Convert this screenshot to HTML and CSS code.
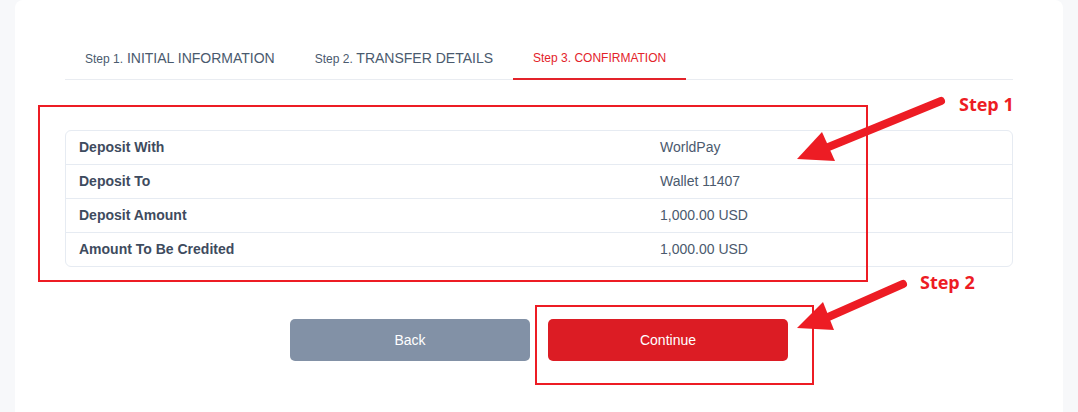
FILE: index.html
```html
<!DOCTYPE html>
<html lang="en">
<head>
    <meta charset="UTF-8">
    <meta name="viewport" content="width=device-width, initial-scale=1.0">
    <title>Deposit - Confirmation</title>
    <link rel="stylesheet" href="styles.css">
</head>
<body>
    <div class="page">
        <div class="card">
            <nav class="steps">
                <a class="step"><span class="step-num">Step 1.</span> INITIAL INFORMATION</a>
                <a class="step"><span class="step-num">Step 2.</span> TRANSFER DETAILS</a>
                <a class="step active"><span class="step-num">Step 3.</span> CONFIRMATION</a>
            </nav>

            <div class="summary">
                <div class="row">
                    <div class="label">Deposit With</div>
                    <div class="value">WorldPay</div>
                </div>
                <div class="row">
                    <div class="label">Deposit To</div>
                    <div class="value">Wallet 11407</div>
                </div>
                <div class="row">
                    <div class="label">Deposit Amount</div>
                    <div class="value">1,000.00 USD</div>
                </div>
                <div class="row">
                    <div class="label">Amount To Be Credited</div>
                    <div class="value">1,000.00 USD</div>
                </div>
            </div>

            <div class="actions">
                <button type="button" class="btn btn-back">Back</button>
                <button type="button" class="btn btn-continue">Continue</button>
            </div>
        </div>

        <!-- annotations drawn over the screenshot -->
        <div class="notes">
            <div class="mark mark-1"></div>
            <div class="mark mark-2"></div>
            <span class="note note-1">Step 1</span>
            <span class="note note-2">Step 2</span>
            <svg class="arrows" width="1078" height="412" viewBox="0 0 1078 412">
                <line x1="941" y1="101" x2="826" y2="148" stroke="#ed1c24" stroke-width="8" stroke-linecap="round"/>
                <polygon points="797,159 822,132 835,161" fill="#ed1c24"/>
                <line x1="903" y1="284" x2="826" y2="318" stroke="#ed1c24" stroke-width="8" stroke-linecap="round"/>
                <polygon points="797,328 823,302 834,330" fill="#ed1c24"/>
            </svg>
        </div>
    </div>
</body>
</html>
```

FILE: styles.css
```css
/* General Style */
body {
    font-family: 'Liberation Sans', Arial, sans-serif;
    background-color: #f7f8fa;
    color: #4a5568;
    margin: 0;
    padding: 0;
}

.page {
    position: relative;
    height: 412px;
    overflow: hidden;
}

.card {
    margin: 0 15px;
    background-color: #ffffff;
    border-radius: 8px 8px 0 0;
    padding: 50px 50px 60px;
    min-height: 362px;
}

/* Steps */
.steps {
    display: flex;
    border-bottom: 1px solid #e9ecf1;
}

.step {
    padding: 0 20px 11px;
    font-size: 14px;
    line-height: 16px;
    color: #4a5a6e;
    border-bottom: 2px solid transparent;
    margin-bottom: -1px;
    cursor: pointer;
}

.step-num {
    font-size: 12px;
}

.step.active {
    color: #e3232a;
    font-size: 12px;
    border-bottom-color: #e3232a;
}

/* Summary table */
.summary {
    margin-top: 50px;
    border: 1px solid #e6ebf2;
    border-radius: 6px;
}

.row {
    display: grid;
    grid-template-columns: 581px 1fr;
    height: 33px;
    align-items: center;
    font-size: 14px;
    padding-bottom: 1px;
    box-sizing: border-box;
}

.row + .row {
    height: 34px;
    border-top: 1px solid #e6ebf2;
}

.label {
    padding-left: 13px;
    font-weight: bold;
    color: #3e4b5e;
}

.value {
    padding-left: 13px;
    color: #4b5a6e;
}

/* Buttons */
.actions {
    display: flex;
    justify-content: center;
    gap: 18px;
    margin-top: 52px;
}

.btn {
    width: 240px;
    height: 42px;
    border: none;
    border-radius: 5px;
    color: #ffffff;
    font-family: 'Liberation Sans', Arial, sans-serif;
    font-size: 14px;
    cursor: pointer;
}

.btn-back {
    background-color: #8291a6;
}

.btn-continue {
    background-color: #dc1c24;
}

/* Annotations */
.notes {
    position: absolute;
    inset: 0;
    pointer-events: none;
}

.mark {
    position: absolute;
    border: 2px solid #ed1c24;
}

.mark-1 {
    left: 38px;
    top: 105px;
    width: 826px;
    height: 173px;
}

.mark-2 {
    left: 535px;
    top: 305px;
    width: 275px;
    height: 76px;
}

.note {
    position: absolute;
    font-family: 'Open Sans', sans-serif;
    font-weight: bold;
    font-size: 18px;
    line-height: 20px;
    color: #ed1c24;
}

.note-1 {
    left: 959px;
    top: 94px;
}

.note-2 {
    left: 920px;
    top: 272px;
}

.arrows {
    position: absolute;
    left: 0;
    top: 0;
}
```
